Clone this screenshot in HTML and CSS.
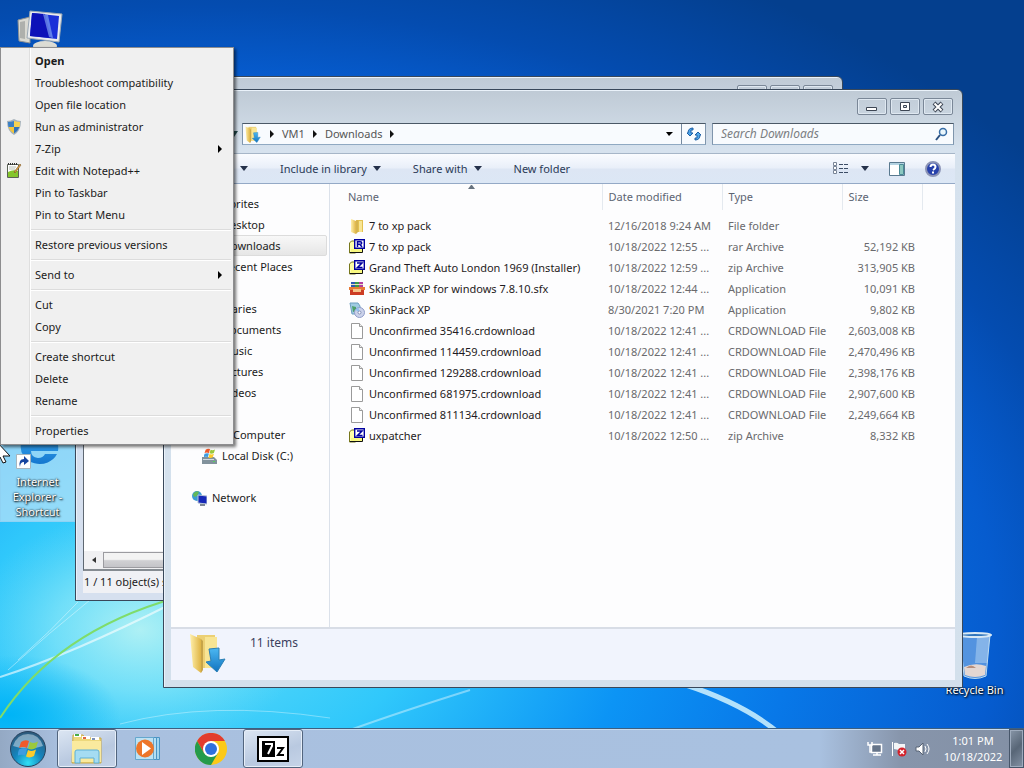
FILE: index.html
```
<!DOCTYPE html>
<html lang="en">
<head>
  <meta charset="UTF-8">
  <meta name="viewport" content="width=device-width, initial-scale=1.0">
  <title>Downloads</title>
  <link rel="stylesheet" href="styles.css">
</head>
<body>
  <!-- shared icons -->
  <svg class="sprites" width="0" height="0" aria-hidden="true">
    <defs>
      <linearGradient id="gold" x1="0" x2="1"><stop offset="0" stop-color="#fff0ab"/><stop offset="1" stop-color="#dfb445"/></linearGradient>
      <linearGradient id="arrow" x1="0" x2="0" y1="0" y2="1"><stop offset="0" stop-color="#4cb8f2"/><stop offset="1" stop-color="#1173c0"/></linearGradient>
      <symbol id="i-folder" viewBox="0 0 16 16">
        <path d="M7 2h7v12H7z" fill="#e2c04f"/>
        <path d="M10 3h3v11h-3z" fill="#f8e593"/>
        <path d="M2 1l5 2v13l-5-2z" fill="url(#gold)"/>
        <path d="M7 3l2-1v12l-2 2z" fill="#d5b450"/>
      </symbol>
      <symbol id="i-downloads" viewBox="0 0 40 40">
        <path d="M8 2h18v33H8z" fill="#ecd074"/>
        <path d="M16 4h12v31H16z" fill="#f8e594"/>
        <path d="M1 1l11 5v34L4 34z" fill="url(#gold)"/>
        <path d="M12 6l2 2v29l-2 3z" fill="#c7a448"/>
        <path d="M20 16l10-1v12l6-1-8 13-11-10 5-1z" fill="url(#arrow)" stroke="#2c80b5"/>
      </symbol>
      <symbol id="i-archive" viewBox="0 0 16 16">
        <path d="M.500 14V4l2-2h4v12z" fill="#ffffa8" stroke="#77771c"/>
        <path d="M1 13.500h12.500v-4" fill="#ffffa8" stroke="#111"/>
        <path d="M2 10h11v3H2z" fill="#f8f880"/>
        <path d="M5.700.700h9.600v8.600H5.700z" fill="#fff" stroke="#0000a0" stroke-width="1.400"/>
      </symbol>
      <symbol id="i-rar" viewBox="0 0 16 16">
        <use href="#i-archive"/>
        <path d="M8.500 8V2.700h2.700q1.500 0 1.500 1.300t-1.500 1.300H8.500M11 5.500l2 2.500" fill="none" stroke="#0000a0" stroke-width="1.500"/>
      </symbol>
      <symbol id="i-zip" viewBox="0 0 16 16">
        <use href="#i-archive"/>
        <path d="M8 3h5L8.500 7.500h5" fill="none" stroke="#0000a0" stroke-width="1.500"/>
      </symbol>
      <symbol id="i-file" viewBox="0 0 16 16">
        <path d="M2.500.500h8l3 3v12h-11z" fill="#fff" stroke="#9a9a9a"/>
        <path d="M10.500.500v3h3" fill="#eee" stroke="#9a9a9a"/>
      </symbol>
      <symbol id="i-sfx" viewBox="0 0 16 16">
        <path d="M2 1h4v5H2z" fill="#2d59b4"/><path d="M6 1h4v5H6z" fill="#3b9a4a"/><path d="M10 1h4v5h-4z" fill="#b13fa0"/>
        <path d="M2 3h12v1H2z" fill="#e8e2c0"/>
        <path d="M0 6h16v3H0z" fill="#e77a35"/>
        <path d="M1 9h14v5H1z" fill="#cc3c24"/>
        <path d="M4 8h8v3H4z" fill="#f5c389"/>
      </symbol>
      <symbol id="i-setup" viewBox="0 0 16 16">
        <path d="M1 1h8l2 3v8H3z" fill="#9fcbe2" stroke="#6c9fc0"/>
        <path d="M3 4l4 1v4l-3 1z" fill="#4da06a"/>
        <circle cx="10.500" cy="10.500" r="5" fill="#cbd2ea" stroke="#8f9cc8"/>
        <path d="M10.500 10.500l-4-2.500a5 5 0 0 1 3-2.500z" fill="#8fc0ef"/>
        <circle cx="10.500" cy="10.500" r="1.500" fill="#fff" stroke="#8390b8"/>
      </symbol>
      <symbol id="i-flag" viewBox="0 0 20 20">
        <path d="M3 3q4-3 8-1L9 9Q5 7 1 9z" fill="#f0592a"/>
        <path d="M12 3q4 2 8-.5L18 9q-4 2.500-8 .5z" fill="#9bc93c"/>
        <path d="M1 10.500q4-2 8-.5l-2 6.500q-4-1.500-8 .5z" fill="#3e9ce0"/>
        <path d="M10 11q4 2 8-.5L16 17q-4 2.500-8 .5z" fill="#fccb2b"/>
      </symbol>
    </defs>
  </svg>

  <div class="desktop">
    <svg class="wallpaper" viewBox="0 0 1024 768" preserveAspectRatio="none" aria-hidden="true">
      <defs>
        <radialGradient id="sky" gradientUnits="userSpaceOnUse" cx="0" cy="0" r="860" gradientTransform="translate(200 620) scale(1.25 .85)">
          <stop offset="0" stop-color="#5fdcf8"/>
          <stop offset=".2" stop-color="#30c8fb"/>
          <stop offset=".4" stop-color="#0c94f5"/>
          <stop offset=".55" stop-color="#0878e8"/>
          <stop offset=".74" stop-color="#065ccf"/>
          <stop offset=".84" stop-color="#044cb0"/>
          <stop offset="1" stop-color="#043f8e"/>
        </radialGradient>
        <radialGradient id="glow"><stop offset="0" stop-color="#b8f3f4" stop-opacity=".9"/><stop offset=".5" stop-color="#90e9f8" stop-opacity=".6"/><stop offset="1" stop-color="#6edcf8" stop-opacity="0"/></radialGradient>
        <radialGradient id="deep"><stop offset="0" stop-color="#00b4f6"/><stop offset="1" stop-color="#00b4f6" stop-opacity="0"/></radialGradient>
      </defs>
      <rect width="1024" height="768" fill="url(#sky)"/>
      <ellipse cx="140" cy="630" rx="170" ry="120" fill="url(#glow)"/>
      <ellipse cx="10" cy="715" rx="110" ry="60" fill="url(#deep)"/>
      <g fill="none" stroke="#fff">
        <path d="M0 677Q70 655 175 602" stroke-width="2" opacity=".6"/>
        <path d="M8 670Q50 632 90 600M18 660Q50 632 78 602" opacity=".4"/>
        <path d="M120 724Q210 700 330 718" opacity=".35"/>
        <path d="M350 730Q400 712 470 690" stroke-width="2" opacity=".4"/>
        <path d="M683 684Q745 704 780 734" stroke="#c7ecfd" stroke-width="5" opacity=".9"/>
      </g>
      <path d="M0 718Q56 632 175 598" fill="none" stroke="#7fdc6a" stroke-width="2"/>
    </svg>

    <a class="shortcut my-computer" href="#" aria-label="Computer">
      <svg width="48" height="44" viewBox="0 0 48 44">
        <path d="M2 12l12-3v26L3 33z" fill="#d9d9d2" stroke="#8e9294"/>
        <path d="M4 14l5-1v18l-5-1z" fill="#aeb0ac"/>
        <path d="M14 3l32 3-3 28-32-4z" fill="#e9ebee" stroke="#9aa8b4"/>
        <path d="M16 5l27 3-2 23-27-3z" fill="#1a30d8"/>
        <path d="M16 5l13 1 6 24-21-2z" fill="#0d12b8"/>
        <path d="M27 6l5 1 5 23-4-1z" fill="#8fb4f8" opacity=".6"/>
        <ellipse cx="29" cy="38" rx="12" ry="5" fill="#dcdcd4"/>
      </svg>
    </a>

    <a class="shortcut explorer-link" href="#">
      <svg width="56" height="44" viewBox="0 0 56 44">
        <defs><linearGradient id="ie" x1="0" x2="0" y1="0" y2="1"><stop offset="0" stop-color="#3fb0f5"/><stop offset="1" stop-color="#1577cf"/></linearGradient></defs>
        <path d="M29 0a19 17 0 1 0 18 24H35q-2 4-7 4-7-1-7-7h27A19 18 0 0 0 29 0zM21 15q2-5 8-5t8 5z" fill="url(#ie)"/>
        <path d="M6.500 24.500h14v14h-14z" fill="#fff" stroke="#a7b5bd"/>
        <path d="M10 37q-2-8 4-8v-3l5 5-5 4v-3q-4 0-4 5z" fill="#17459f"/>
      </svg>
      <span>Internet Explorer - Shortcut</span>
    </a>

    <a class="shortcut recycle-bin" href="#">
      <svg width="40" height="50" viewBox="0 0 40 50">
        <path d="M5 4h30l-4 41q-11 5-22 0z" fill="#9fc8ee" fill-opacity=".5" stroke="#bcdcf2"/>
        <path d="M22 6l-2 26h12l3-28z" fill="#d0e6f8" opacity=".4"/>
        <path d="M9 36q11-5 22-1l-1 9q-10 4-20 0z" fill="#e4d7d2"/>
        <path d="M11 37q5-5 10 0z" fill="#b88f7c"/>
        <ellipse cx="20" cy="4" rx="16" ry="2" fill="#2f75bc" stroke="#d8e9f5" stroke-width="2"/>
      </svg>
      <span>Recycle Bin</span>
    </a>

    <!-- 7-Zip window at the back -->
    <section class="window archive-window" aria-label="7-Zip">
      <div class="caption-buttons back-buttons" aria-hidden="true"><i></i><i></i><i></i></div>
      <div class="archive-list"></div>
      <div class="scrollbar">
        <button class="scroll-arrow" aria-label="Scroll left"><svg width="4" height="6"><path d="M4 0v6L0 3z" fill="#333"/></svg></button>
        <div class="scroll-thumb"></div>
      </div>
      <div class="archive-status">1 / 11 object(s) selected</div>
    </section>

    <!-- Downloads window -->
    <section class="window explorer-window" aria-label="Downloads">
      <header class="titlebar">
        <div class="caption-buttons">
          <button aria-label="Minimize"><svg width="14" height="12"><path d="M1.500 6.500h10v3h-10z" fill="#fff" stroke="#3d4654"/></svg></button>
          <button aria-label="Maximize"><svg width="14" height="12"><path d="M2.500 1.500h9v8h-9z" fill="#fff" stroke="#3d4654"/><path d="M5.500 4.500h3v2h-3z" fill="#dbe5ef" stroke="#3d4654"/></svg></button>
          <button aria-label="Close"><svg width="14" height="12"><path d="M3 2l8 8M11 2l-8 8" stroke="#3d4654" stroke-width="4"/><path d="M3.500 2.500l7 7M10.500 2.500l-7 7" stroke="#fff" stroke-width="2"/></svg></button>
        </div>
      </header>

      <div class="address-row">
        <svg class="nav-arrow" width="8" height="8"><path d="M0 1h7L3 7z" fill="#224a4c"/></svg>
        <nav class="address" aria-label="Address">
          <svg width="17" height="17"><use href="#i-downloads"/></svg>
          <svg class="crumb-arrow" width="4" height="8"><path d="M0 0v8l4-4z"/></svg>
          <a href="#">VM1</a>
          <svg class="crumb-arrow" width="4" height="8"><path d="M0 0v8l4-4z"/></svg>
          <a href="#">Downloads</a>
          <svg class="crumb-arrow" width="4" height="8"><path d="M0 0v8l4-4z"/></svg>
          <button class="history" aria-label="Previous locations"><svg width="7" height="4"><path d="M0 0h7L3 4z"/></svg></button>
          <button class="refresh" aria-label="Refresh"><svg width="16" height="14" viewBox="0 0 16 14"><path d="M7 1v2H5v3h2L4 9 1 6h1q0-5 5-5z" fill="#4ba3e8" stroke="#1d5ea5"/><path d="M9 13v-2h2V8H9l3-3 3 3h-1q0 5-5 5z" fill="#53a9ea" stroke="#1d5ea5"/></svg></button>
        </nav>
        <form class="search">
          <input type="search" placeholder="Search Downloads" aria-label="Search Downloads">
          <svg width="14" height="14" viewBox="0 0 14 14"><circle cx="9" cy="5" r="3.500" fill="#e9f6fc" stroke="#376da6" stroke-width="1.500"/><path d="M6 8l-4 5" stroke="#284f80" stroke-width="2"/></svg>
        </form>
      </div>

      <div class="toolbar">
        <button class="organize">Organize <svg width="8" height="5"><path d="M0 0h8L4 5z"/></svg></button>
        <button>Include in library <svg width="8" height="5"><path d="M0 0h8L4 5z"/></svg></button>
        <button>Share with <svg width="8" height="5"><path d="M0 0h8L4 5z"/></svg></button>
        <button>New folder</button>
        <div class="toolbar-right">
          <button aria-label="Change your view"><svg width="16" height="13"><path d="M.500.500h3v3h-3zM.500 4.500h3v3h-3zM.500 8.500h3v3h-3z" fill="#fff" stroke="#788496"/><path d="M6 2.500h9M6 6.500h9M6 10.500h9" stroke="#3c4d66" stroke-dasharray="4 1"/></svg></button>
          <button aria-label="More view options"><svg width="8" height="5"><path d="M0 0h8L4 5z"/></svg></button>
          <button aria-label="Preview pane"><svg width="16" height="14"><path d="M.500.500h15v13H.500z" fill="#fff" stroke="#59798f"/><path d="M1 1h14v2H1z" fill="#b4d3e2"/><path d="M10.500 2.500h4v10h-4z" fill="#8cc8c0" stroke="#4a8b97"/></svg></button>
          <button aria-label="Help"><svg width="16" height="16"><circle cx="8" cy="8" r="7" fill="#2741ab" stroke="#8b93b5" stroke-width="2"/><path d="M5.500 6q0-2.500 2.500-2.500T10.500 6Q10.500 7.500 8 9" fill="none" stroke="#fff" stroke-width="2"/><path d="M7 10.500h2v2H7z" fill="#fff"/></svg></button>
        </div>
      </div>

      <div class="window-body">
        <nav class="sidebar" aria-label="Folders">
          <ul>
            <li><a class="group" href="#">Favorites</a></li>
            <li><a href="#">Desktop</a></li>
            <li><a class="selected" href="#">Downloads</a></li>
            <li><a href="#">Recent Places</a></li>
          </ul>
          <ul>
            <li><a class="group" href="#">Libraries</a></li>
            <li><a href="#">Documents</a></li>
            <li><a href="#">Music</a></li>
            <li><a href="#">Pictures</a></li>
            <li><a href="#">Videos</a></li>
          </ul>
          <ul>
            <li><a class="computer" href="#">Computer</a></li>
            <li><a href="#"><svg width="16" height="16"><path d="M1 9h12l3 3v4H1z" fill="#82929c"/><path d="M2 11h11v1H2z" fill="#d2dbe0"/><path d="M12 13h2v1h-2z" fill="#56d25b"/><use href="#i-flag" x="3" y="0" width="11" height="11"/></svg>Local Disk (C:)</a></li>
          </ul>
          <ul>
            <li><a class="group" href="#"><svg width="16" height="16"><circle cx="6" cy="6" r="5" fill="#3c9bd4"/><path d="M2 4q3-4 6-2L6 6l-3 1zM7 8l3-2v3z" fill="#63b957"/><path d="M7 5l9 1v8l-9-1z" fill="#1628b8" stroke="#b6c3d6"/><path d="M9 15h5" stroke="#7c8795" stroke-width="2"/></svg>Network</a></li>
          </ul>
        </nav>

        <div class="files">
          <table>
            <colgroup><col class="col-name"><col class="col-date"><col class="col-type"><col class="col-size"><col></colgroup>
            <thead>
              <tr>
                <th aria-sort="ascending">Name<svg class="sort" width="7" height="4"><path d="M0 4l3-4h1l3 4z" fill="#67727e"/></svg></th>
                <th>Date modified</th><th>Type</th><th>Size</th><th></th>
              </tr>
            </thead>
            <tbody>
              <tr><td><svg><use href="#i-folder"/></svg>7 to xp pack</td><td>12/16/2018 9:24 AM</td><td>File folder</td><td></td><td></td></tr>
              <tr><td><svg><use href="#i-rar"/></svg>7 to xp pack</td><td>10/18/2022 12:55 ...</td><td>rar Archive</td><td>52,192 KB</td><td></td></tr>
              <tr><td><svg><use href="#i-zip"/></svg>Grand Theft Auto London 1969 (Installer)</td><td>10/18/2022 12:59 ...</td><td>zip Archive</td><td>313,905 KB</td><td></td></tr>
              <tr><td><svg><use href="#i-sfx"/></svg>SkinPack XP for windows 7.8.10.sfx</td><td>10/18/2022 12:44 ...</td><td>Application</td><td>10,091 KB</td><td></td></tr>
              <tr><td><svg><use href="#i-setup"/></svg>SkinPack XP</td><td>8/30/2021 7:20 PM</td><td>Application</td><td>9,802 KB</td><td></td></tr>
              <tr><td><svg><use href="#i-file"/></svg>Unconfirmed 35416.crdownload</td><td>10/18/2022 12:41 ...</td><td>CRDOWNLOAD File</td><td>2,603,008 KB</td><td></td></tr>
              <tr><td><svg><use href="#i-file"/></svg>Unconfirmed 114459.crdownload</td><td>10/18/2022 12:41 ...</td><td>CRDOWNLOAD File</td><td>2,470,496 KB</td><td></td></tr>
              <tr><td><svg><use href="#i-file"/></svg>Unconfirmed 129288.crdownload</td><td>10/18/2022 12:41 ...</td><td>CRDOWNLOAD File</td><td>2,398,176 KB</td><td></td></tr>
              <tr><td><svg><use href="#i-file"/></svg>Unconfirmed 681975.crdownload</td><td>10/18/2022 12:41 ...</td><td>CRDOWNLOAD File</td><td>2,907,600 KB</td><td></td></tr>
              <tr><td><svg><use href="#i-file"/></svg>Unconfirmed 811134.crdownload</td><td>10/18/2022 12:41 ...</td><td>CRDOWNLOAD File</td><td>2,249,664 KB</td><td></td></tr>
              <tr><td><svg><use href="#i-zip"/></svg>uxpatcher</td><td>10/18/2022 12:50 ...</td><td>zip Archive</td><td>8,332 KB</td><td></td></tr>
            </tbody>
          </table>
        </div>
      </div>

      <footer class="details">
        <svg width="40" height="40"><use href="#i-downloads"/></svg>
        <p>11 items</p>
      </footer>
    </section>

    <!-- right-click menu -->
    <div class="context-menu" role="menu">
      <button role="menuitem" class="default">Open</button>
      <button role="menuitem">Troubleshoot compatibility</button>
      <button role="menuitem">Open file location</button>
      <button role="menuitem"><svg class="menu-icon" width="16" height="16"><path d="M8 0q3 2 7 2 0 10-7 14Q1 12 1 2q4 0 7-2z" fill="#a7b3bb"/><path d="M8 2v6H2.500Q2 6 2 3q3 0 6-1z" fill="#3b7fc4"/><path d="M8 2q3 1 6 1 0 3-.5 5H8z" fill="#f7d250"/><path d="M2.500 8H8v6.500Q4 12 2.500 8z" fill="#f3c63c"/><path d="M8 8h5.500Q12 12 8 14.500z" fill="#3273b8"/></svg>Run as administrator</button>
      <button role="menuitem" aria-haspopup="true">7-Zip<svg class="submenu" width="4" height="8"><path d="M0 0v8l4-4z"/></svg></button>
      <button role="menuitem"><svg class="menu-icon" width="16" height="16"><path d="M1.500 1.500h11v13h-11z" fill="#fff" stroke="#5b6256"/><path d="M2 9q5-3 10-1v6H2z" fill="#84c52c"/><path d="M2 0h1v2H2zM4 0h1v2H4zM6 0h1v2H6zM8 0h1v2H8zM10 0h1v2h-1z" fill="#333"/><path d="M3 4h7M3 6h6" stroke="#b8bfb4"/><path d="M8 9l6-8 1 1-6 8z" fill="#eba640" stroke="#60431a" stroke-width=".5"/></svg>Edit with Notepad++</button>
      <button role="menuitem">Pin to Taskbar</button>
      <button role="menuitem">Pin to Start Menu</button>
      <hr>
      <button role="menuitem">Restore previous versions</button>
      <hr>
      <button role="menuitem" aria-haspopup="true">Send to<svg class="submenu" width="4" height="8"><path d="M0 0v8l4-4z"/></svg></button>
      <hr>
      <button role="menuitem">Cut</button>
      <button role="menuitem">Copy</button>
      <hr>
      <button role="menuitem">Create shortcut</button>
      <button role="menuitem">Delete</button>
      <button role="menuitem">Rename</button>
      <hr>
      <button role="menuitem">Properties</button>
    </div>

    <svg class="cursor" width="12" height="20" viewBox="0 0 12 20" aria-hidden="true"><path d="M-4-3V17l4-4 3 6 3-1-3-6h7z" fill="#fff" stroke="#111"/></svg>

    <footer class="taskbar">
      <button class="start" aria-label="Start">
        <svg width="38" height="38" viewBox="0 0 38 38">
          <defs><radialGradient id="orb" cx=".5" cy=".9" r=".9"><stop offset="0" stop-color="#30e0f5"/><stop offset=".45" stop-color="#1484bd"/><stop offset="1" stop-color="#2f5878"/></radialGradient></defs>
          <circle cx="19" cy="19" r="17.500" fill="url(#orb)" stroke="#26415c"/>
          <path d="M4 16Q8 4 19 4t15 12q-15 5-30 0z" fill="#d7e5ef" opacity=".5"/>
          <use href="#i-flag" x="9" y="9" width="20" height="20"/>
        </svg>
      </button>
      <button class="task running" aria-label="Windows Explorer">
        <svg width="34" height="32" viewBox="0 0 34 32">
          <path d="M3 2h10l2 3h16v25H2z" fill="#edd87b" stroke="#c8a849"/>
          <path d="M4 1h7v3H4z" fill="#fff"/><path d="M5 1h4v2H5z" fill="#49ad48"/>
          <path d="M12 3h8v3h-8z" fill="#fff"/><path d="M13 4h3v2h-3z" fill="#de6745"/>
          <path d="M21 4h8v3h-8z" fill="#fff"/><path d="M22 5h3v2h-3z" fill="#7b8fb5"/>
          <path d="M2 8h29v21H2z" fill="#faea9e"/>
          <path d="M5 30V19q0-2 2-2h20q2 0 2 2v11h-5v-5H10v5z" fill="#a5dcf2" stroke="#5eb0d6"/>
        </svg>
      </button>
      <button class="task" aria-label="Windows Media Player">
        <svg width="28" height="28" viewBox="0 0 28 28">
          <path d="M6.500 2.500h18v22h-18z" fill="#a4d6ee" stroke="#4b94c4"/>
          <path d="M3.500 2.500h18v22h-18z" fill="#b5dff3" stroke="#4b94c4"/>
          <path d="M.500 2.500h18v22H.500z" fill="#bce2f4" stroke="#65a7cd"/>
          <circle cx="10" cy="13.500" r="9" fill="#ed762a"/>
          <path d="M7 7v13l9-6.500z" fill="#fff"/>
        </svg>
      </button>
      <button class="task" aria-label="Google Chrome">
        <svg width="32" height="32" viewBox="0 0 32 32">
          <circle cx="16" cy="16" r="16" fill="#fbc918"/>
          <path d="M2.100 8A16 16 0 0 1 29.900 8H16l-7 12z" fill="#e23c2e"/>
          <path d="M2.100 8A16 16 0 0 0 16 32l7-12-7 4-7-4z" fill="#249b4b"/>
          <circle cx="16" cy="16" r="8" fill="#fff"/><circle cx="16" cy="16" r="6" fill="#2f70dd"/>
        </svg>
      </button>
      <button class="task running" aria-label="7-Zip File Manager">
        <svg width="32" height="26" viewBox="0 0 32 26">
          <path d="M1 1h30v24H1z" fill="#fff" stroke="#000" stroke-width="2"/>
          <path d="M5 5h13v16H5z" fill="#000"/>
          <path d="M8 8h7v2l-4 8" fill="none" stroke="#fff" stroke-width="2"/>
          <path d="M20 12h6l-5 7h6" fill="none" stroke="#000" stroke-width="2"/>
        </svg>
      </button>
      <div class="tray">
        <svg width="16" height="16"><path d="M4.500 3.500h10v8h-10z" fill="#66758a" stroke="#fff" stroke-width="1.500"/><path d="M6 14h8M10 12v2M1 1v3h4V1M3 4v7h2" fill="none" stroke="#fff" stroke-width="1.500"/></svg>
        <svg width="16" height="16"><path d="M1 1h1v14H1z" fill="#fff"/><path d="M3 2q3-1 5 1h6v6H8L3 8z" fill="#f3f5f7"/><circle cx="11" cy="11" r="4.500" fill="#d3222b"/><path d="M9 9l4 4M13 9l-4 4" stroke="#fff" stroke-width="1.500"/></svg>
        <svg width="16" height="16"><path d="M1 6h3l4-4v12l-4-4H1z" fill="#fff" stroke="#566274"/><path d="M10 5q2 3 0 6M12 3q4 5 0 10" fill="none" stroke="#fff"/></svg>
      </div>
      <div class="clock"><time>1:01 PM</time><time>10/18/2022</time></div>
      <button class="show-desktop" aria-label="Show desktop"></button>
    </footer>
  </div>
</body>
</html>
```
FILE: styles.css
```
* {
  box-sizing: border-box;
}

body {
  margin: 0;
  font-family: "Segoe UI", "Noto Sans", "Open Sans", sans-serif;
  font-size: 11px;
  line-height: 16px;
  color: #1b1b1b;
}

button {
  border: none;
  background: none;
  padding: 0;
  font: inherit;
  color: inherit;
}

a {
  color: inherit;
  text-decoration: none;
}

svg {
  display: block;
  flex-shrink: 0;
}

.sprites {
  position: absolute;
}

.desktop {
  position: relative;
  height: 100vh;
  min-height: 640px;
  overflow: hidden;
  display: flex;
  flex-direction: column;
  justify-content: flex-end;
}

.wallpaper {
  position: absolute;
  top: 0;
  left: 0;
  width: 100%;
  height: 100%;
}

/* desktop icons */
.shortcut {
  position: absolute;
  display: flex;
  flex-direction: column;
  align-items: center;
  width: 75px;
  line-height: 15px;
  text-align: center;
  color: #fff;
  text-shadow: 1px 1px 2px #000, 0 0 2px #000;
}

.my-computer {
  left: 2px;
  top: 8px;
}

.explorer-link {
  left: 0;
  top: 429px;
  padding: 0 6px 2px;
  background-color: rgba(190, 228, 248, 0.7);
  border: 1px solid #8fd2f3;
}

.recycle-bin {
  right: 12px;
  top: 631px;
  gap: 1px;
}

/* windows */
.window {
  position: absolute;
  display: flex;
  flex-direction: column;
  padding: 0 7px 7px;
  border: 1px solid #39485a;
  border-radius: 6px 6px 0 0;
  background: linear-gradient(#bfcad5, #d6e2ee 60px, #d3e0ec);
  box-shadow: inset 1px 1px 0 #eaf2fa;
}

.archive-window {
  left: 75px;
  right: 181px;
  top: 76px;
  bottom: 167px;
  background: linear-gradient(#bfcad5, #d6e0ef 60px);
}

.explorer-window {
  left: 163px;
  right: 61px;
  top: 89px;
  bottom: 80px;
}

.caption-buttons {
  display: flex;
  gap: 3px;
}

.caption-buttons button,
.caption-buttons i {
  display: flex;
  align-items: center;
  justify-content: center;
  width: 30px;
  height: 17px;
  border: 1px solid #7a8797;
  border-radius: 2px;
  box-shadow: inset 0 0 0 1px #dfe8f1;
}

.back-buttons {
  height: 30px;
  padding: 8px 2px 0 0;
  justify-content: flex-end;
}

.archive-list {
  flex: 1;
  background-color: #fff;
  border-left: 1px solid #5f6872;
}

.scrollbar {
  display: flex;
  height: 20px;
  background-color: #f0f0f2;
  border-left: 1px solid #5f6872;
  border-bottom: 2px solid #858b91;
}

.scroll-arrow {
  width: 19px;
  display: flex;
  align-items: center;
  justify-content: center;
}

.scroll-thumb {
  flex: 1;
  margin: 1px 20px 1px 0;
  border: 1px solid #9b9ba0;
  background: linear-gradient(#f3f3f3 45%, #d0d0d3 55%, #c4c4c8);
}

.archive-status {
  height: 22px;
  padding: 3px 1px;
  background-color: #f0f1f5;
}

.titlebar {
  display: flex;
  justify-content: flex-end;
  height: 33px;
  padding: 8px 2px 0 0;
}

.address-row {
  display: flex;
  align-items: center;
  height: 22px;
  margin-bottom: 8px;
  padding-left: 60px;
}

.nav-arrow {
  margin-right: 3px;
}

.address {
  display: flex;
  align-items: center;
  flex: 1;
  height: 22px;
  gap: 8px;
  padding-left: 2px;
  border: 1px solid;
  border-color: #4a5866 #7f95ac #8fa9c2;
  background-color: #f8fbfe;
  color: #555;
}

.crumb-arrow {
  fill: #111;
}

.history {
  margin-left: auto;
}

.refresh {
  display: flex;
  align-items: center;
  justify-content: center;
  width: 24px;
  height: 20px;
  border-left: 1px solid #75899f;
}

.search {
  display: flex;
  align-items: center;
  width: 242px;
  height: 22px;
  margin: 0 1px 0 6px;
  padding: 0 5px 0 8px;
  border: 1px solid;
  border-color: #4a5866 #7f95ac #8fa9c2;
  background-color: #f8fbfe;
}

.search input {
  flex: 1;
  min-width: 0;
  padding: 0;
  border: none;
  background: none;
  font: inherit;
  font-size: 12px;
}

.search input::placeholder {
  color: #7b7e82;
  font-style: italic;
}

.toolbar {
  display: flex;
  align-items: center;
  gap: 32px;
  height: 31px;
  padding: 0 14px;
  border-top: 1px solid #a6b6c8;
  border-bottom: 1px solid #94a9c6;
  background: linear-gradient(#fafcff, #e9eff9 48%, #dde6f4 52%, #dce7f5);
  color: #2b3a57;
}

.toolbar button {
  display: flex;
  align-items: center;
  gap: 6px;
  fill: #25314a;
  white-space: nowrap;
}

.organize {
  width: 63px;
  justify-content: flex-end;
}

.toolbar-right {
  display: flex;
  align-items: center;
  gap: 20px;
  margin-left: auto;
}

.toolbar-right button:nth-child(2) {
  margin-left: -8px;
}

.window-body {
  flex: 1;
  display: flex;
  min-height: 0;
  background-color: #fdfdfe;
}

.sidebar {
  width: 159px;
  padding: 9px 2px 0 0;
  border-right: 1px solid #dbe1ea;
  overflow: hidden;
}

.sidebar ul {
  list-style: none;
  margin: 0 0 21px;
  padding: 0;
}

.sidebar a {
  display: flex;
  align-items: center;
  justify-content: flex-start;
  gap: 5px;
  height: 21px;
  padding-left: 51px;
  white-space: nowrap;
}

.sidebar a.group {
  padding-left: 41px;
}

.sidebar a.computer {
  padding-left: 62px;
}

.sidebar a:has(svg) {
  padding-left: 30px;
}

.sidebar a.group:has(svg) {
  padding-left: 20px;
}

.sidebar a.selected {
  border: 1px solid #dcdcdc;
  border-radius: 2px;
  background: linear-gradient(#f8f8f8, #e6e6e6);
}

.files {
  flex: 1;
  min-width: 0;
  overflow: hidden;
}

.files table {
  width: 100%;
  table-layout: fixed;
  border-collapse: collapse;
  color: #6a6a6d;
}

.col-name {
  width: 272px;
}

.col-date,
.col-type {
  width: 120px;
}

.col-size {
  width: 80px;
}

.files th {
  position: relative;
  height: 26px;
  padding: 0 6px;
  border-right: 1px solid #e4e9ef;
  font-weight: normal;
  text-align: left;
  color: #5c6472;
}

.files th:first-child {
  padding-left: 18px;
}

.files th:last-child {
  border: none;
}

.sort {
  position: absolute;
  top: 1px;
  left: 51%;
}

.files thead::after {
  content: "";
  display: block;
  height: 5px;
}

.files td {
  height: 21px;
  padding: 0 6px;
  white-space: nowrap;
}

.files td:first-child {
  display: flex;
  align-items: center;
  gap: 4px;
  padding-left: 19px;
  color: #1f1b22;
}

.files td svg {
  width: 16px;
  height: 16px;
}

.files td:nth-child(4) {
  text-align: right;
  padding: 0 7px 0 0;
}

.details {
  display: flex;
  gap: 21px;
  height: 53px;
  padding: 4px 18px;
  border-top: 2px solid #d8dde6;
  background-color: #f1f4fd;
  color: #3b3f5e;
}

.details p {
  margin: 2px 0 0;
  font-size: 12px;
}

/* context menu */
.context-menu {
  position: absolute;
  left: 0;
  top: 47px;
  width: 234px;
  padding: 2px;
  border: 1px solid #8d8d8f;
  background: linear-gradient(90deg, #f0f0f0 28px, #dfdfdf 28px, #dfdfdf 29px, #fff 29px, #fff 30px, #f0f0f0 30px);
  box-shadow: 2px 2px 3px rgba(0, 0, 0, 0.55);
}

.context-menu button {
  position: relative;
  display: flex;
  align-items: center;
  width: 100%;
  height: 22px;
  padding: 0 9px 0 32px;
  text-align: left;
}

.context-menu .default {
  font-weight: bold;
}

.context-menu hr {
  height: 2px;
  margin: 3px 0 3px 28px;
  border: none;
  border-top: 1px solid #dcdcdc;
  background-color: #fff;
}

.menu-icon {
  position: absolute;
  left: 3px;
  top: 3px;
}

.submenu {
  margin-left: auto;
}

.cursor {
  position: absolute;
  left: 0;
  top: 444px;
}

/* taskbar */
.taskbar {
  position: relative;
  display: flex;
  align-items: center;
  height: 40px;
  gap: 2px;
  border-top: 1px solid #3d5f80;
  box-shadow: inset 0 1px 0 #c7dcf0;
  background: linear-gradient(90deg, #94a9c4, #a9c0df 6%, #a9c1e0 80%, #8795ab 88%, #8390a5);
}

.start,
.task {
  display: flex;
  align-items: center;
  justify-content: center;
}

.start {
  width: 55px;
}

.task {
  width: 60px;
  height: 39px;
}

.running {
  border: 1px solid #52657e;
  border-radius: 3px;
  background: linear-gradient(160deg, #dce6f3, #b9c9e0 60%, #c6d4e8);
  box-shadow: inset 0 0 0 1px #e6eef8;
}

.tray {
  display: flex;
  gap: 8px;
  margin: 0 6px 0 auto;
}

.clock {
  display: flex;
  flex-direction: column;
  align-items: center;
  width: 68px;
  color: #fff;
}

.show-desktop {
  width: 15px;
  height: 39px;
  border: 1px solid #47566a;
  background: linear-gradient(135deg, #8896a8, #586677 50%, #8492a5);
  box-shadow: inset 0 0 0 1px #9eabbd;
}
```
